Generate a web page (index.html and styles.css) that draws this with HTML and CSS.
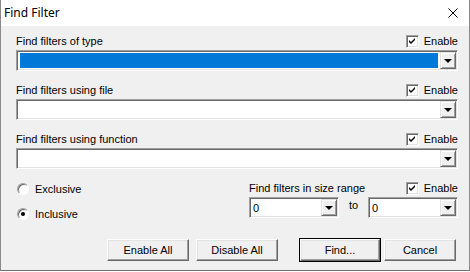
FILE: index.html
```html
<!DOCTYPE html>
<html lang="en">
<head>
    <meta charset="UTF-8">
    <title>Find Filter</title>
    <link rel="stylesheet" href="styles.css">
</head>
<body>
    <div class="dialog">
        <div class="titlebar">
            <span class="title">Find Filter</span>
            <svg class="close" width="10" height="10" viewBox="0 0 10 10">
                <path d="M0.5 0.5 L9.5 9.5 M9.5 0.5 L0.5 9.5" stroke="#000" stroke-width="1" fill="none"/>
            </svg>
        </div>

        <div class="content">
            <div class="group">
                <div class="label-row">
                    <span>Find filters of type</span>
                    <label class="check"><span class="box"><svg width="9" height="9" viewBox="0 0 9 9"><path d="M1 3 L3 5 L7 1 L7 3 L3 7 L1 5 Z" fill="#000"/></svg></span>Enable</label>
                </div>
                <div class="combo">
                    <div class="field"><div class="selected"></div></div>
                    <div class="drop"><span class="arrow"></span></div>
                </div>
            </div>

            <div class="group">
                <div class="label-row">
                    <span>Find filters using file</span>
                    <label class="check"><span class="box"><svg width="9" height="9" viewBox="0 0 9 9"><path d="M1 3 L3 5 L7 1 L7 3 L3 7 L1 5 Z" fill="#000"/></svg></span>Enable</label>
                </div>
                <div class="combo">
                    <div class="field"></div>
                    <div class="drop"><span class="arrow"></span></div>
                </div>
            </div>

            <div class="group">
                <div class="label-row">
                    <span>Find filters using function</span>
                    <label class="check"><span class="box"><svg width="9" height="9" viewBox="0 0 9 9"><path d="M1 3 L3 5 L7 1 L7 3 L3 7 L1 5 Z" fill="#000"/></svg></span>Enable</label>
                </div>
                <div class="combo">
                    <div class="field"></div>
                    <div class="drop"><span class="arrow"></span></div>
                </div>
            </div>

            <div class="lower">
                <div class="radios">
                    <label class="radio"><span class="circle"></span>Exclusive</label>
                    <label class="radio"><span class="circle on"></span>Inclusive</label>
                </div>
                <div class="range">
                    <div class="label-row">
                        <span>Find filters in size range</span>
                        <label class="check"><span class="box"><svg width="9" height="9" viewBox="0 0 9 9"><path d="M1 3 L3 5 L7 1 L7 3 L3 7 L1 5 Z" fill="#000"/></svg></span>Enable</label>
                    </div>
                    <div class="range-row">
                        <div class="combo small">
                            <div class="field">0</div>
                            <div class="drop"><span class="arrow"></span></div>
                        </div>
                        <span class="to">to</span>
                        <div class="combo small">
                            <div class="field">0</div>
                            <div class="drop"><span class="arrow"></span></div>
                        </div>
                    </div>
                </div>
            </div>

            <div class="buttons">
                <button class="btn">Enable All</button>
                <button class="btn">Disable All</button>
                <button class="btn default">Find...</button>
                <button class="btn cancel">Cancel</button>
            </div>
        </div>
    </div>
</body>
</html>
```

FILE: styles.css
```css
body {
    margin: 0;
    background: #fff;
    font-family: "Liberation Sans", Arial, sans-serif;
    font-size: 11px;
    color: #000;
}

.dialog {
    width: 470px;
    height: 271px;
    box-sizing: border-box;
    background: #f0f0f0;
    border-left: 1px solid #8a8a8a;
    border-right: 1px solid #8a8a8a;
    border-bottom: 1px solid #6e6e6e;
}

.titlebar {
    height: 26px;
    background: #fff;
    display: flex;
    align-items: center;
    justify-content: space-between;
    padding: 0 11px 0 3px;
}
.title {
    font-family: "Noto Sans", sans-serif;
    font-size: 12px;
    margin-top: -1px;
}
.close {
    margin-top: -1px;
}

.content {
    padding: 9px 11px 0 15px;
}

.group {
    margin-bottom: 13px;
}

.label-row {
    height: 13px;
    line-height: 13px;
    display: flex;
    justify-content: space-between;
    align-items: center;
    margin-bottom: 2px;
}

.check {
    display: flex;
    align-items: center;
    gap: 5px;
}
.box {
    width: 13px;
    height: 13px;
    box-sizing: border-box;
    background: #fff;
    border: 1px solid;
    border-color: #a0a0a0 #fff #fff #a0a0a0;
    box-shadow: inset 1px 1px 0 #696969, inset -1px -1px 0 #e3e3e3;
    display: flex;
    align-items: center;
    justify-content: center;
}
.box svg {
    margin-left: 1px;
}

.combo {
    height: 21px;
    box-sizing: border-box;
    display: flex;
    border: 1px solid;
    border-color: #a0a0a0 #fff #fff #a0a0a0;
    box-shadow: inset 1px 1px 0 #696969, inset -1px -1px 0 #e3e3e3;
    background: #fff;
    padding: 2px;
}
.field {
    flex: 1;
    background: #fff;
    padding: 0 1px;
    line-height: 15px;
}
.selected {
    height: 15px;
    background: #0078d7;
}
.drop {
    width: 16px;
    height: 17px;
    margin: -1px -1px -1px 1px;
    box-sizing: border-box;
    background: #f0f0f0;
    border: 1px solid;
    border-color: #e3e3e3 #696969 #696969 #e3e3e3;
    box-shadow: inset 1px 1px 0 #fff, inset -1px -1px 0 #a0a0a0;
    display: flex;
    align-items: center;
    justify-content: center;
}
.arrow {
    width: 0;
    height: 0;
    border-left: 4px solid transparent;
    border-right: 4px solid transparent;
    border-top: 4px solid #000;
    margin-top: 1px;
}

.lower {
    display: flex;
    justify-content: space-between;
}
.radios {
    display: flex;
    flex-direction: column;
    gap: 12px;
    padding-left: 1px;
}
.radio {
    display: flex;
    align-items: center;
    gap: 6px;
    height: 13px;
}
.circle {
    width: 12px;
    height: 12px;
    box-sizing: border-box;
    border-radius: 50%;
    border: 1px solid;
    border-color: #a0a0a0 #fff #fff #a0a0a0;
    box-shadow: inset 1px 1px 0 #696969;
    background: #fff;
    position: relative;
}
.circle.on::after {
    content: "";
    position: absolute;
    left: 3px;
    top: 3px;
    width: 4px;
    height: 4px;
    border-radius: 50%;
    background: #000;
}

.range {
    width: 209px;
}
.range-row {
    display: flex;
    align-items: center;
    justify-content: space-between;
}
.combo.small {
    width: 90px;
}
.combo.small .field {
    line-height: 16px;
}
.to {
    margin-top: -6px;
}

.buttons {
    display: flex;
    margin-top: 19px;
    padding-left: 91px;
}
.btn {
    width: 82px;
    height: 22px;
    box-sizing: border-box;
    background: #f0f0f0;
    font-family: "Liberation Sans", Arial, sans-serif;
    font-size: 11px;
    color: #000;
    border: 1px solid;
    border-color: #fff #696969 #696969 #fff;
    box-shadow: inset -1px -1px 0 #a0a0a0, inset 1px 1px 0 #e3e3e3;
    padding: 0;
    margin-right: 7px;
}
.btn.default {
    width: 80px;
    margin-left: 15px;
    margin-right: 4px;
    outline: 1px solid #000;
    outline-offset: 0;
}
.btn.cancel {
    width: 72px;
    margin-right: 0;
}
```
